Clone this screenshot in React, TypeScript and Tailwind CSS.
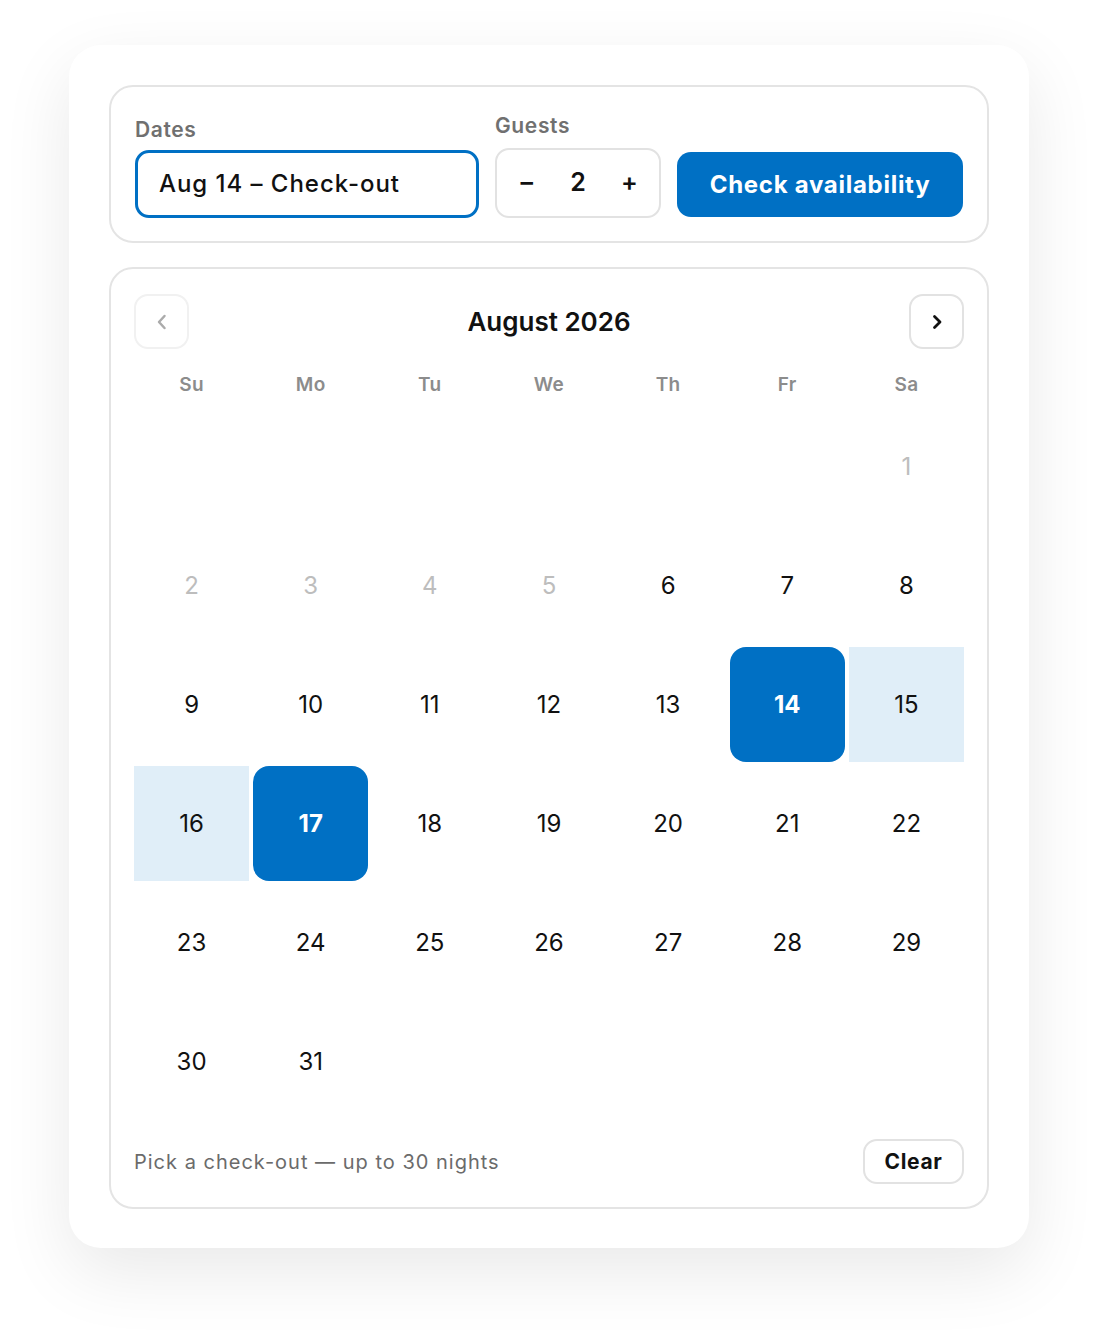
import { useState } from 'react'

const WEEKDAYS = ['Su', 'Mo', 'Tu', 'We', 'Th', 'Fr', 'Sa']

function Chevron({ dir, muted }: { dir: 'left' | 'right'; muted?: boolean }) {
  return (
    <svg
      width="24"
      height="24"
      viewBox="0 0 24 24"
      fill="none"
      stroke={muted ? '#ababab' : '#111111'}
      strokeWidth={muted ? 2.5 : 2.8}
      strokeLinecap="round"
      strokeLinejoin="round"
    >
      {dir === 'left' ? <path d="M14.5 6L9 12l5.5 6" /> : <path d="M9.5 6.5L15 12l-5.5 5.5" />}
    </svg>
  )
}

export default function App() {
  const [guests, setGuests] = useState(2)
  const start = 14
  const end = 17

  const cells: (number | null)[] = [...Array(6).fill(null), ...Array.from({ length: 31 }, (_, i) => i + 1)]

  return (
    <div
      className="min-h-screen bg-white pt-[45px] flex justify-center"
      style={{ fontFamily: 'Inter, "Noto Sans", sans-serif' }}
    >
      <div className="w-[960px] h-[1203px] rounded-[32px] bg-white p-10 shadow-[0_24px_70px_rgba(0,0,0,0.09)] flex flex-col gap-6">
        {/* search bar */}
        <div className="rounded-[24px] border-2 border-[#e4e4e4] px-6 pt-[27px] pb-[23px] flex items-end gap-4">
          <div className="flex-1 flex flex-col">
            <span className="text-[21px] leading-6 font-semibold tracking-[0.03em] text-[#707070] mb-2">Dates</span>
            <div className="h-[68px] rounded-[14px] border-[3px] border-[#0070c4] px-[21px] flex items-center text-[24px] font-medium tracking-[0.04em] text-[#111]">
              Aug 14 – Check-out
            </div>
          </div>
          <div className="w-[166px] flex flex-col">
            <span className="text-[21px] leading-6 font-semibold tracking-[0.03em] text-[#707070] mb-[10px]">Guests</span>
            <div className="h-[70px] rounded-[14px] border-2 border-[#e2e2e2] px-1 flex items-center text-[25px] font-semibold text-[#111]">
              <button className="flex-1 text-center" onClick={() => setGuests(g => Math.max(1, g - 1))}>
                –
              </button>
              <span className="flex-1 text-center">{guests}</span>
              <button className="flex-1 text-center" onClick={() => setGuests(g => g + 1)}>
                +
              </button>
            </div>
          </div>
          <button className="w-[286px] h-[65px] mb-px rounded-[14px] bg-[#0070c4] text-white text-[24px] font-bold tracking-[0.03em]">
            Check availability
          </button>
        </div>

        {/* calendar */}
        <div className="rounded-[24px] border-2 border-[#e4e4e4] px-[23px] pt-[25px] pb-[23px] flex flex-col">
          <div className="h-[55px] flex items-center justify-between">
            <button className="w-[55px] h-[55px] rounded-[14px] border-2 border-[#f1f1f1] flex items-center justify-center">
              <Chevron dir="left" muted />
            </button>
            <h2 className="text-[26px] font-semibold text-[#111]">August 2026</h2>
            <button className="w-[55px] h-[55px] rounded-[14px] border-2 border-[#e2e2e2] flex items-center justify-center">
              <Chevron dir="right" />
            </button>
          </div>

          <div className="mt-6 grid grid-cols-7 gap-1">
            {WEEKDAYS.map(d => (
              <span key={d} className="text-center text-[19px] leading-6 font-semibold tracking-[0.02em] text-[#8c8c8c]">
                {d}
              </span>
            ))}
          </div>

          <div className="mt-3 grid grid-cols-7 gap-1">
            {cells.map((day, i) => {
              if (day === null) return <div key={i} className="h-[115px]" />
              const selected = day === start || day === end
              const inRange = day > start && day < end
              const past = day < 6
              return (
                <div
                  key={i}
                  className={
                    selected
                      ? 'h-[115px] rounded-[16px] bg-[#0070c4] text-white font-bold text-[24px] flex items-center justify-center'
                      : inRange
                        ? 'h-[115px] bg-[#e0eef8] text-[#111] text-[24px] flex items-center justify-center'
                        : past
                          ? 'h-[115px] text-[#bdbdbd] text-[24px] flex items-center justify-center'
                          : 'h-[115px] text-[#111] text-[24px] flex items-center justify-center'
                  }
                >
                  {day}
                </div>
              )
            })}
          </div>

          <div className="mt-5 flex items-center justify-between">
            <span className="text-[20px] tracking-[0.05em] text-[#6b6b6b]">Pick a check-out — up to 30 nights</span>
            <button className="w-[101px] h-[45px] rounded-[14px] border-2 border-[#e2e2e2] text-[21px] font-bold tracking-[0.03em] text-[#111]">
              Clear
            </button>
          </div>
        </div>
      </div>
    </div>
  )
}
